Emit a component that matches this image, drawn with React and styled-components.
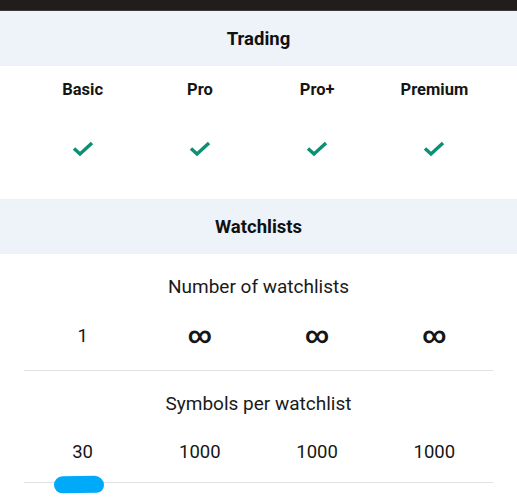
import React from 'react';
import styled, { createGlobalStyle } from 'styled-components';

const plans = ['Basic', 'Pro', 'Pro+', 'Premium'];

const features = [
  { title: 'Number of watchlists', values: ['1', '∞', '∞', '∞'], gap: 25, bottom: 22 },
  { title: 'Symbols per watchlist', values: ['30', '1000', '1000', '1000'], gap: 24, bottom: 18, mark: true },
];

const Check = () => (
  <svg width="22" height="16" viewBox="0 0 22 16">
    <path d="M2 7.5 L8 13 L20 2" fill="none" stroke="#0c8f72" strokeWidth="3.4" />
  </svg>
);

const App = () => {
  return (
    <>
      <Global />
      <Page>
        <StatusBar />
        <SectionHeader>Trading</SectionHeader>
        <PlanBody>
          <Columns>
            {plans.map((p) => (
              <PlanName key={p}>{p}</PlanName>
            ))}
          </Columns>
          <Columns $gap={39}>
            {plans.map((p) => (
              <Cell key={p}><Check /></Cell>
            ))}
          </Columns>
        </PlanBody>
        <SectionHeader>Watchlists</SectionHeader>
        <Features>
          {features.map((f) => (
            <Feature key={f.title} $bottom={f.bottom}>
              <FeatureTitle>{f.title}</FeatureTitle>
              <Columns $gap={f.gap}>
                {f.values.map((v, i) => (
                  <Value key={i} $inf={v === '∞'}>{v}</Value>
                ))}
              </Columns>
              {f.mark && <Scribble />}
            </Feature>
          ))}
        </Features>
      </Page>
    </>
  );
};

export default App;

const Global = createGlobalStyle`
  body {
    margin: 0;
    background: #fff;
    font-family: Roboto, "Liberation Sans", sans-serif;
    color: #111;
  }
`;

const Page = styled.div`
  width: 517px;
  height: 500px;
  overflow: hidden;
`;

const StatusBar = styled.div`
  height: 10px;
  background: #211d1d;
  border-bottom: 1px solid #3a3838;
`;

const SectionHeader = styled.div`
  height: 55px;
  display: flex;
  align-items: center;
  justify-content: center;
  background: #eef2f9;
  font-size: 18.5px;
  font-weight: 700;
  color: #111;
`;

const PlanBody = styled.div`
  height: 133px;
  padding: 12px 24px 0;
  box-sizing: border-box;
`;

const Columns = styled.div`
  display: grid;
  grid-template-columns: repeat(4, 1fr);
  margin-top: ${(p) => p.$gap || 0}px;
`;

const Cell = styled.div`
  display: flex;
  justify-content: center;
  height: 16px;
`;

const PlanName = styled.div`
  text-align: center;
  font-size: 16.5px;
  font-weight: 700;
  line-height: 24px;
  color: #151515;
`;

const Features = styled.div`
  padding: 0 24px;
`;

const Feature = styled.div`
  position: relative;
  padding: 21px 0 ${(p) => p.$bottom}px;
  border-bottom: 1px solid #e2e2e6;
`;

const FeatureTitle = styled.div`
  text-align: center;
  font-size: 19px;
  line-height: 24px;
  color: #1a1a1a;
`;

const Value = styled.div`
  text-align: center;
  font-size: ${(p) => (p.$inf ? '23px' : '18.5px')};
  font-weight: ${(p) => (p.$inf ? 700 : 400)};
  line-height: 24px;
  color: #161616;
`;

const Scribble = styled.div`
  position: absolute;
  left: 30px;
  bottom: -11px;
  width: 50px;
  height: 17px;
  border-radius: 9px 10px 8px 9px;
  background: #00aaf8;
  transform: rotate(-1deg);
`;
